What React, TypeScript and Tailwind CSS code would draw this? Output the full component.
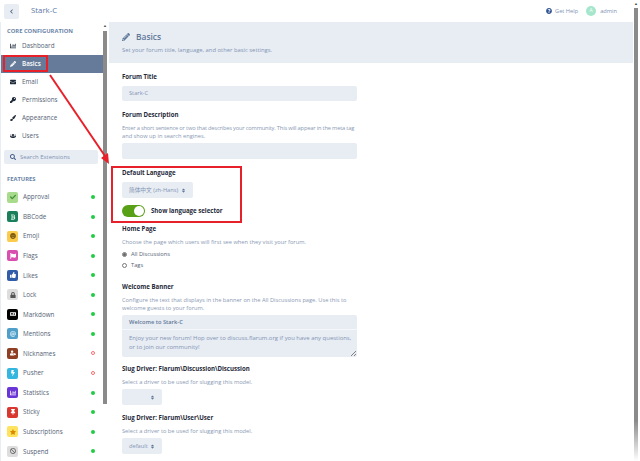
import type { ReactNode } from 'react'
import { FaChartBar, FaPencilAlt, FaEnvelope, FaKey, FaPaintBrush, FaUsers, FaSearch, FaChevronLeft, FaQuestionCircle, FaSort, FaCheck, FaBold, FaSmile, FaFlag, FaThumbsUp, FaLock, FaMarkdown, FaAt, FaUserTag, FaBolt, FaThumbtack, FaStar, FaBan } from 'react-icons/fa'

const coreLinks = [
  { label: 'Dashboard', icon: FaChartBar },
  { label: 'Basics', icon: FaPencilAlt, active: true },
  { label: 'Email', icon: FaEnvelope },
  { label: 'Permissions', icon: FaKey },
  { label: 'Appearance', icon: FaPaintBrush },
  { label: 'Users', icon: FaUsers },
]

const features = [
  { label: 'Approval', icon: FaCheck, tile: 'bg-[#a8dc8c]', ink: 'text-[#3f8f3a]', on: true },
  { label: 'BBCode', icon: FaBold, tile: 'bg-[#1a7f5a]', ink: 'text-[#d5efe3]', on: true },
  { label: 'Emoji', icon: FaSmile, tile: 'bg-[#fbcb4e]', ink: 'text-[#7a5a10]', on: true },
  { label: 'Flags', icon: FaFlag, tile: 'bg-[#d84fb0]', ink: 'text-white', on: true },
  { label: 'Likes', icon: FaThumbsUp, tile: 'bg-[#2f5da8]', ink: 'text-white', on: true },
  { label: 'Lock', icon: FaLock, tile: 'bg-[#dddddd]', ink: 'text-[#555555]', on: true },
  { label: 'Markdown', icon: FaMarkdown, tile: 'bg-black', ink: 'text-white', on: true },
  { label: 'Mentions', icon: FaAt, tile: 'bg-[#4f9fc9]', ink: 'text-[#cfe6f2]', on: true },
  { label: 'Nicknames', icon: FaUserTag, tile: 'bg-[#8e3f24]', ink: 'text-white', on: false },
  { label: 'Pusher', icon: FaBolt, tile: 'bg-[#35b6de]', ink: 'text-white', on: false },
  { label: 'Statistics', icon: FaChartBar, tile: 'bg-[#6a35d6]', ink: 'text-white', on: true },
  { label: 'Sticky', icon: FaThumbtack, tile: 'bg-[#d8382f]', ink: 'text-white', on: true },
  { label: 'Subscriptions', icon: FaStar, tile: 'bg-[#fde35f]', ink: 'text-[#d98a00]', on: true },
  { label: 'Suspend', icon: FaBan, tile: 'bg-[#dddddd]', ink: 'text-[#666666]', on: true },
]

function Label({ children }: { children: ReactNode }) {
  return <div className="mb-[3px] h-[12px] text-[6.1px] leading-[12px] font-bold whitespace-nowrap text-[#1f2a3a]">{children}</div>
}

function Help({ children }: { children: ReactNode }) {
  return <div className="mb-[3px] text-[5.7px] leading-[8px] whitespace-nowrap text-[#8a9ab5]">{children}</div>
}

function Select({ children }: { children?: ReactNode }) {
  return (
    <div className="mt-[2px] flex h-[16px] w-[40px] items-center justify-between rounded-[2px] bg-[#e8ecf3] px-[7px] text-[5.7px] text-[#8296b5]">
      <span>{children}</span>
      <FaSort size={5} className="text-[#5f7898]" />
    </div>
  )
}

function Scrollbar({ thumb }: { thumb: string }) {
  return (
    <div className="flex w-[6px] shrink-0 flex-col bg-white pt-[2px]">
      <div className="h-[6px] w-[4px] text-center text-[4px] leading-[4px] text-[#505050]">▲</div>
      <div className={`w-[4px] ${thumb}`} />
    </div>
  )
}

export default function App() {
  return (
    <div className="relative flex h-[461px] w-[640px] overflow-hidden bg-white font-['Open_Sans',sans-serif]">
      <div className="flex min-w-0 flex-1 flex-col pr-[1px]">
        {/* Top bar */}
        <div className="flex h-[22px] shrink-0 items-center pl-[4px] pr-[16px]">
          <div className="flex h-[15px] w-[15px] items-center justify-center rounded-[2px] bg-[#e8ecf3] text-[#4a6183]">
            <FaChevronLeft size={5} />
          </div>
          <span className="ml-[12px] text-[7.8px] text-[#5a78a5]">Stark-C</span>
          <div className="ml-auto flex items-center text-[5.7px] text-[#7f93b3]">
            <FaQuestionCircle size={6} className="text-[#2f5590]" />
            <span className="ml-[3px]">Get Help</span>
            <div className="ml-[8px] flex h-[10px] w-[10px] items-center justify-center rounded-full bg-[#a6e6cc] text-[5px] text-white">A</div>
            <span className="ml-[4px]">admin</span>
          </div>
        </div>

        <div className="flex min-h-0 flex-1">
          {/* Sidebar */}
          <div className="flex h-full w-[103px] shrink-0 flex-col border-l border-[#e8ecf3]">
            <div className="pl-[6px] pt-[4px] text-[5.8px] leading-[10px] font-bold text-[#6a84a8]">CORE CONFIGURATION</div>
            <div className="mt-[1px]">
              {coreLinks.map(link => (
                <div
                  key={link.label}
                  className={`flex h-[18px] items-center pl-[9px] text-[6.3px] ${link.active ? 'bg-[#667a99] font-semibold text-white' : 'text-[#566375]'}`}
                >
                  <link.icon size={6} className={link.active ? 'text-white' : 'text-[#1f2a3a]'} />
                  <span className="ml-[6px]">{link.label}</span>
                </div>
              ))}
            </div>
            <div className="ml-[3px] mr-[5px] mt-[5px] flex h-[15px] items-center rounded-[2px] bg-[#e8ecf3] pl-[6px] text-[5.9px] text-[#7f93b3]">
              <FaSearch size={6} className="text-[#3d5a85]" />
              <span className="ml-[4px]">Search Extensions</span>
            </div>
            <div className="pl-[6px] pt-[10px] text-[5.8px] leading-[10px] font-bold text-[#6a84a8]">FEATURES</div>
            <div className="mt-[3px]">
              {features.map(item => (
                <div key={item.label} className="flex h-[19.55px] items-center pl-[6px] pr-[8px] text-[6.3px] text-[#566375]">
                  <div className={`flex h-[11px] w-[11px] items-center justify-center rounded-[2px] ${item.tile}`}>
                    <item.icon size={6} className={item.ink} />
                  </div>
                  <span className="ml-[5px]">{item.label}</span>
                  {item.on ? (
                    <span className="ml-auto h-[4px] w-[4px] rounded-full bg-[#22cc44]" />
                  ) : (
                    <span className="ml-auto h-[4px] w-[4px] rounded-full border border-[#f07070]" />
                  )}
                </div>
              ))}
            </div>
          </div>
          <Scrollbar thumb="h-[373px] mt-[1px] bg-[#8a8a8a]" />

          {/* Main */}
          <div className="min-w-0 flex-1">
            <div className="flex h-[41px] flex-col justify-center bg-[#e8ecf3] pl-[13px]">
              <div className="flex items-center text-[#5f7898]">
                <FaPencilAlt size={8} />
                <span className="ml-[6px] text-[8.4px] leading-[12px] font-semibold">Basics</span>
              </div>
              <div className="mt-[3px] text-[5.85px] leading-[9px] text-[#8296b5]">Set your forum title, language, and other basic settings.</div>
            </div>
            <div className="w-[248px] pl-[13px] pt-[8px]">
              <div className="mb-[8px]">
                <Label>Forum Title</Label>
                <div className="flex h-[15px] w-[235px] items-center rounded-[2px] bg-[#e8ecf3] px-[7px] text-[5.7px] text-[#8296b5]">Stark-C</div>
              </div>
              <div className="mb-[8px]">
                <Label>Forum Description</Label>
                <Help>
                  <span className="tracking-[-0.17px]">Enter a short sentence or two that describes your community. This will appear in the meta tag</span>
                  <br />
                  and show up in search engines.
                </Help>
                <div className="h-[16px] w-[235px] rounded-[2px] bg-[#e8ecf3]" />
              </div>
              <div className="mb-[6px]">
                <Label>Default Language</Label>
                <div className="flex h-[16px] w-[71px] items-center rounded-[2px] bg-[#e8ecf3] pl-[7px] text-[5.7px] whitespace-nowrap text-[#8296b5]">
                  <span className="font-['Open_Sans','Noto_Sans_CJK_SC',sans-serif]">简体中文 (zh-Hans)</span>
                  <FaSort size={5} className="ml-[3px] text-[#5f7898]" />
                </div>
                <div className="mt-[7px] flex items-center">
                  <div className="flex h-[12px] w-[23px] items-center justify-end rounded-full bg-[#58a016] pr-[1px]">
                    <div className="h-[10px] w-[10px] rounded-full bg-white" />
                  </div>
                  <span className="ml-[6px] text-[6.1px] font-bold text-[#1f2a3a]">Show language selector</span>
                </div>
              </div>
              <div className="mb-[10px]">
                <Label>Home Page</Label>
                <Help>Choose the page which users will first see when they visit your forum.</Help>
                <div className="flex h-[11px] items-center text-[5.7px] text-[#566375]">
                  <span className="flex h-[5px] w-[5px] items-center justify-center rounded-full border border-[#777777]"><span className="h-[3px] w-[3px] rounded-full bg-[#666666]" /></span>
                  <span className="ml-[4px]">All Discussions</span>
                </div>
                <div className="flex h-[11px] items-center text-[5.7px] text-[#566375]">
                  <span className="h-[5px] w-[5px] rounded-full border border-[#777777]" />
                  <span className="ml-[4px]">Tags</span>
                </div>
              </div>
              <div className="mb-[6px]">
                <Label>Welcome Banner</Label>
                <Help>
                  Configure the text that displays in the banner on the All Discussions page. Use this to
                  <br />
                  welcome guests to your forum.
                </Help>
                <div className="relative mt-[1px] w-[235px] rounded-[2px] bg-[#e8ecf3] text-[5.7px]">
                  <div className="flex h-[15px] items-center border-b border-white/60 px-[7px] font-semibold text-[#5f7898]">Welcome to Stark-C</div>
                  <div className="h-[27px] whitespace-nowrap px-[7px] pt-[4px] text-[5.95px] leading-[9px] text-[#8296b5]">
                    Enjoy your new forum! Hop over to discuss.flarum.org if you have any questions,
                    <br />
                    or to join our community!
                  </div>
                  <svg className="absolute bottom-[1px] right-[1px]" width="5" height="5" stroke="#666666" strokeWidth="0.8">
                    <line x1="0" y1="5" x2="5" y2="0" />
                    <line x1="3" y1="5" x2="5" y2="3" />
                  </svg>
                </div>
              </div>
              <div className="mb-[7px]">
                <Label>Slug Driver: Flarum\Discussion\Discussion</Label>
                <Help>Select a driver to be used for slugging this model.</Help>
                <Select />
              </div>
              <div>
                <Label>Slug Driver: Flarum\User\User</Label>
                <Help>Select a driver to be used for slugging this model.</Help>
                <Select>default</Select>
              </div>
            </div>
          </div>
        </div>
      </div>
      <Scrollbar thumb="h-[453px] bg-linear-to-b from-[#8a8a8a] from-[91%] to-white" />

      {/* Annotations drawn over the screenshot */}
      <div className="absolute left-[3px] top-[55px] h-[17px] w-[45px] border-2 border-[#e8202a]" />
      <div className="absolute left-[111px] top-[166px] h-[57px] w-[131px] border-2 border-[#e8202a]" />
      <svg className="absolute left-0 top-0" width="640" height="461" fill="none">
        <line x1="50" y1="75" x2="105" y2="156" stroke="#e8202a" strokeWidth="2" />
        <polygon points="109,164 101,158 108,153" fill="#e8202a" />
      </svg>
    </div>
  )
}
